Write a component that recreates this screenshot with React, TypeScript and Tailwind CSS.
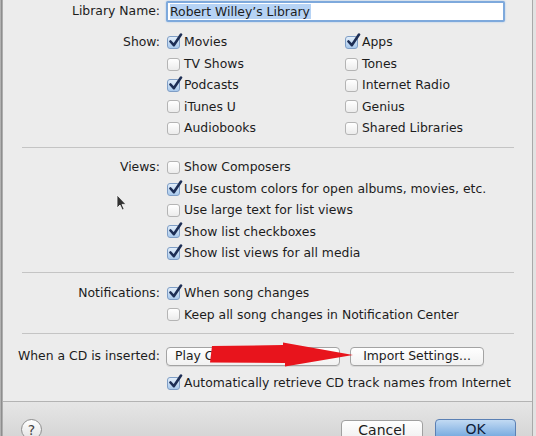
import React from "react";

function Check({ on }: { on?: boolean }) {
  return (
    <span
      className={
        "relative inline-block w-[13px] h-[13px] shrink-0 rounded-[3px] border " +
        (on
          ? "border-[#7f9ec6] bg-gradient-to-b from-[#e2eefa] to-[#a9c9ec]"
          : "border-[#b4b4b4] bg-gradient-to-b from-[#ffffff] to-[#ececec]")
      }
    >
      {on && (
        <svg
          className="absolute left-[0px] top-[-4px] w-[15px] h-[15px]"
          viewBox="0 0 15 15"
        >
          <path
            d="M2.5 8.5 L5.8 12.2 L13 1.5"
            stroke="#1d2e55"
            strokeWidth="2.6"
            fill="none"
            strokeLinecap="round"
            strokeLinejoin="round"
          />
        </svg>
      )}
    </span>
  );
}

function Row({ on, label }: { on?: boolean; label: string }) {
  return (
    <div className="flex items-center h-[21.4px] gap-[4px] pl-[1px]">
      <Check on={on} />
      <span className="whitespace-nowrap">{label}</span>
    </div>
  );
}

function Label({ text }: { text: string }) {
  return (
    <div className="w-[157px] shrink-0 text-right h-[21.4px] flex items-center justify-end whitespace-nowrap">
      {text}
    </div>
  );
}

function Sep() {
  return <div className="ml-[19px] mr-[18px] h-px bg-[#c4c4c4]" />;
}

export default function App() {
  return (
    <div className="relative w-[536px] h-[436px] overflow-hidden flex bg-[#e4e4e4] font-['Lucida_Grande','DejaVu_Sans',sans-serif] text-[12.4px] text-[#1c1c1c]">
      <div className="w-[3px] shrink-0 bg-gradient-to-r from-[#c4c4c4] via-[#8e8e8e] to-[#bdbdbd]" />

      <div className="w-[530px] shrink-0 flex flex-col bg-[#ececec] border-r border-[#a9a9a9]">
        <div className="flex-1 flex flex-col">
          {/* library name */}
          <div className="flex items-center gap-[6px] pt-[1px] h-[22px]">
            <Label text="Library Name:" />
            <div className="w-[339px] h-[21px] rounded-[2px] border-[2px] border-[#7ea9dc] bg-white flex items-center px-[2px] shadow-[0_0_2px_#9cc0ea]">
              <span className="bg-[#b6d3f5] pr-[1px] leading-[15px] whitespace-nowrap">
                Robert Willey’s Library
              </span>
            </div>
          </div>

          {/* show */}
          <div className="flex gap-[6px] mt-[10px]">
            <Label text="Show:" />
            <div className="flex">
              <div className="w-[178px]">
                <Row on label="Movies" />
                <Row label="TV Shows" />
                <Row on label="Podcasts" />
                <Row label="iTunes U" />
                <Row label="Audiobooks" />
              </div>
              <div>
                <Row on label="Apps" />
                <Row label="Tones" />
                <Row label="Internet Radio" />
                <Row label="Genius" />
                <Row label="Shared Libraries" />
              </div>
            </div>
          </div>

          <div className="mt-[8px]">
            <Sep />
          </div>

          {/* views */}
          <div className="flex gap-[6px] mt-[9px]">
            <Label text="Views:" />
            <div>
              <Row label="Show Composers" />
              <Row on label="Use custom colors for open albums, movies, etc." />
              <Row label="Use large text for list views" />
              <Row on label="Show list checkboxes" />
              <Row on label="Show list views for all media" />
            </div>
          </div>

          <div className="mt-[8px]">
            <Sep />
          </div>

          {/* notifications */}
          <div className="flex gap-[6px] mt-[10px]">
            <Label text="Notifications:" />
            <div>
              <Row on label="When song changes" />
              <Row label="Keep all song changes in Notification Center" />
            </div>
          </div>

          <div className="mt-[7px]">
            <Sep />
          </div>

          {/* cd */}
          <div className="flex items-center gap-[6px] mt-[13px] h-[19px]">
            <Label text="When a CD is inserted:" />
            <div className="flex gap-[10px]">
              <div className="w-[174px] h-[19px] rounded-[4px] border border-[#a3a3a3] bg-gradient-to-b from-white to-[#f1f1f1] flex items-center pl-[8px] shadow-[0_1px_0_#d9d9d9]">
                Play CD
              </div>
              <div className="w-[134px] h-[19px] rounded-[4px] border border-[#a3a3a3] bg-gradient-to-b from-white to-[#f1f1f1] flex items-center justify-center shadow-[0_1px_0_#d9d9d9]">
                Import Settings...
              </div>
            </div>
          </div>

          <div className="flex gap-[6px] mt-[7px]">
            <div className="w-[157px] shrink-0" />
            <Row on label="Automatically retrieve CD track names from Internet" />
          </div>
        </div>

        {/* footer */}
        <div className="h-[35px] shrink-0 border-t border-[#b3b3b3] bg-gradient-to-b from-[#e6e6e6] to-[#d6d6d6] flex items-start pt-[17px] pl-[18px] relative">
          <div className="w-[21px] h-[21px] rounded-full border border-[#8f8f8f] bg-gradient-to-b from-white to-[#e2e2e2] flex items-center justify-center text-[14px] text-[#444] leading-none">
            ?
          </div>
          <div className="ml-auto flex gap-[12px] mr-[16px] items-start">
            <div className="w-[82px] h-[21px] mt-[1px] rounded-[4px] border border-[#a0a0a0] bg-gradient-to-b from-white to-[#efefef] flex items-center justify-center text-[14px]">
              Cancel
            </div>
            <div className="w-[81px] h-[21px] rounded-[4px] border border-[#5b80b4] bg-gradient-to-b from-[#c2daf3] to-[#6da4dc] flex items-center justify-center text-[14px] text-[#10203a]">
              OK
            </div>
          </div>
        </div>
      </div>

      <div className="flex-1 bg-[#e2e2e2]" />

      {/* red annotation arrow */}
      <svg className="absolute left-0 top-0 pointer-events-none" width="536" height="436">
        <polygon
          points="212,346 283,345 283,342.5 353,355 285,366.5 285,363 210,362.5"
          fill="#e8141c"
        />
      </svg>

      {/* mouse cursor */}
      <svg className="absolute left-[115px] top-[194px] pointer-events-none" width="14" height="18" viewBox="0 0 14 18">
        <path
          d="M2 1 L2 14 L5 11 L7.3 16 L9.2 15.2 L7 10.4 L11 10.4 Z"
          fill="#111"
          stroke="#fff"
          strokeWidth="0.8"
          opacity="0.85"
        />
      </svg>
    </div>
  );
}
